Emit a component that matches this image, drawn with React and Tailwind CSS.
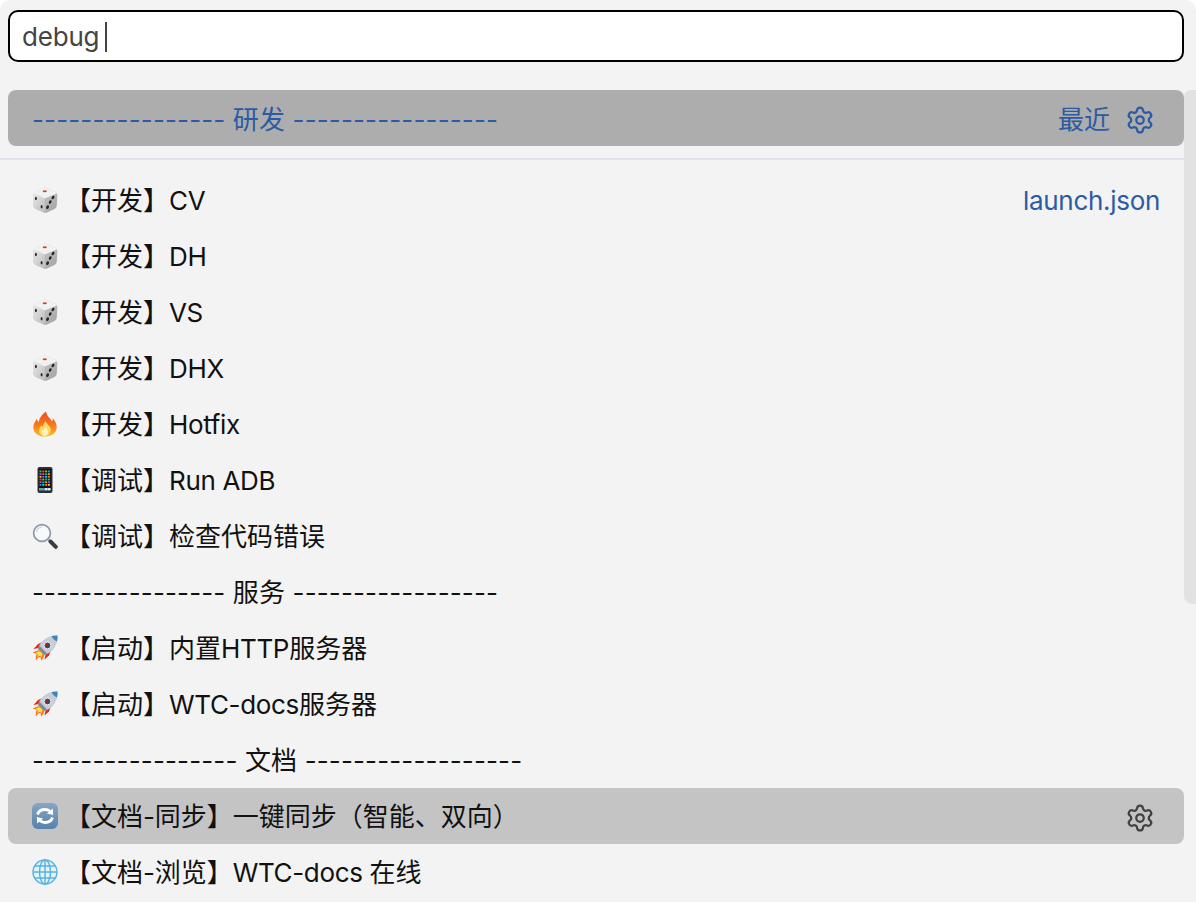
import React from 'react';
import { Settings } from 'lucide-react';

const Dice = () => (
  <svg width="26" height="26" viewBox="0 0 26 26">
    <defs>
      <linearGradient id="diceRight" x1="0" y1="0" x2="1" y2="1">
        <stop offset="0" stopColor="#d8d8d8" />
        <stop offset="1" stopColor="#a0a0a0" />
      </linearGradient>
      <linearGradient id="diceLeft" x1="0" y1="0" x2="1" y2="1">
        <stop offset="0" stopColor="#e8e8e8" />
        <stop offset="1" stopColor="#bcbcbc" />
      </linearGradient>
    </defs>
    <path d="M1 9C1 7 2.500 5.800 4 5L11 1.200C12.500.4 14 .4 15.500 1.200L22.500 4.500C24.200 5.300 25.400 6.500 25.300 8.500L24.800 18C24.700 20 23.800 21.200 22 22.200L15.500 25.300C14 26 12.800 26 11.300 25.300L4 22C2.200 21.200 1.400 20 1.300 18Z" fill="url(#diceRight)" />
    <path d="M1 9c0-1 .4-1.800 1-2.500L12.500 11.500 13.200 25.800c-.7 0-1.300-.1-1.900-.5L4 22C2.200 21.200 1.400 20 1.300 18Z" fill="url(#diceLeft)" />
    <path d="M2 6.500C2.500 5.900 3.200 5.400 4 5L11 1.200C12.500.4 14 .4 15.500 1.200L22.500 4.500C23.500 5 24.300 5.600 24.800 6.400L12.500 11.500Z" fill="#f1f1f1" />
    <ellipse cx="12.800" cy="4.300" rx="2.100" ry="1" fill="#dc3a30" />
    <ellipse cx="3.900" cy="11.500" rx="1" ry="1.700" fill="#2a2a2a" />
    <ellipse cx="9.600" cy="19.800" rx="1" ry="1.700" fill="#2a2a2a" />
    <ellipse cx="21" cy="10.500" rx="1.300" ry="1.900" fill="#242424" transform="rotate(28 21 10.500)" />
    <ellipse cx="18.200" cy="15" rx="1.300" ry="1.900" fill="#242424" transform="rotate(28 18.200 15)" />
    <ellipse cx="15.600" cy="20.200" rx="1.300" ry="1.900" fill="#242424" transform="rotate(28 15.600 20.200)" />
  </svg>
);

const Fire = () => (
  <svg width="26" height="26" viewBox="0 0 26 26">
    <defs>
      <linearGradient id="fireBody" x1="0" y1="0" x2="0" y2="1">
        <stop offset="0" stopColor="#f0481f" />
        <stop offset="0.55" stopColor="#f97a1e" />
        <stop offset="1" stopColor="#fbbf24" />
      </linearGradient>
    </defs>
    <path d="M14 .5C14.500 5 18.500 7 20 10.500c.6-1 .9-2 .8-3.200 2.700 3 3.900 6 3.900 9 0 5.500-5 9.200-11.700 9.200S1.300 22 1.300 16.200c0-3.500 2-6 3.500-8.500.3 1.500.8 2.500 1.700 3.200C7.500 6.500 10.500 3 14 .5Z" fill="url(#fireBody)" />
    <path d="M13.500 10c.5 2.500 4 4.500 5 7.500.8 3.800-2 7.500-5.500 7.500s-6.500-3-5.700-6.800c.3-1.700 1.300-2.700 2.200-4 .3.800.6 1.300 1.200 1.700.5-2.200 1.500-4 2.800-5.900Z" fill="#fdd96a" />
    <path d="M13.300 16c.4 1.400 2.400 2.800 2.700 4.500.2 2.300-1.400 4.500-3 4.500s-3.400-1.700-3.200-3.700c.2-1.200.8-1.900 1.300-2.800.3.400.5.600.9.800.2-1 .6-1.900 1.300-2.800Z" fill="#fff3c4" />
  </svg>
);

const Phone = () => {
  const colors = ['#34c759', '#3b82f6', '#f59e0b', '#ef4444', '#22d3ee', '#a855f7', '#84cc16', '#f97316', '#ec4899', '#0ea5e9', '#facc15', '#10b981'];
  const cells = [];
  for (let r = 0; r < 6; r++) {
    for (let c = 0; c < 4; c++) {
      cells.push(<rect key={r + '-' + c} x={7.500 + c * 2.800} y={3.500 + r * 2.700} width="2" height="1.800" fill={colors[(r * 5 + c * 3) % 12]} />);
    }
  }
  return (
    <svg width="26" height="26" viewBox="0 0 26 26">
      <rect x="5.500" y="0" width="15" height="26" rx="2" fill="#2f3033" />
      <rect x="6.800" y="2" width="12.400" height="22" fill="#131316" />
      {cells}
      <rect x="7" y="21" width="12" height="2.500" fill="#8fa3b5" />
      <rect x="7.500" y="21.300" width="2" height="1.900" fill="#22c55e" />
      <rect x="10.300" y="21.300" width="2" height="1.900" fill="#3b82f6" />
      <rect x="13.100" y="21.300" width="2" height="1.900" fill="#f8fafc" />
      <rect x="15.900" y="21.300" width="2" height="1.900" fill="#f8fafc" />
    </svg>
  );
};

const Magnifier = () => (
  <svg width="26" height="26" viewBox="0 0 26 26">
    <circle cx="10" cy="10" r="8.400" fill="#f7f9fb" stroke="#8d99a6" strokeWidth="1.700" />
    <path d="M4.500 9c.5-2.800 2.700-4.700 5.500-5" fill="none" stroke="#c7d0d9" strokeWidth="1.200" />
    <path d="m16.500 16.500 1.500 1.500" stroke="#a3acb5" strokeWidth="2.400" />
    <path d="m18.500 18.500 5.300 5.300" stroke="#3a3d44" strokeWidth="4" strokeLinecap="round" />
  </svg>
);

const Rocket = () => (
  <svg width="26" height="26" viewBox="0 0 26 26">
    <path d="M7 15 .5 17.500c2 .300 3.500 1 4.300 2-.8.800-1.300 3-1 6 1.500-2.500 3-3.500 4.700-3.500 0 1 .5 2.500 1 3.500 1.500-2 2.800-4 2.800-6Z" fill="#f97316" />
    <path d="M7 16 3.500 18c1 .300 2 .800 2.500 1.800-.4.800-.6 1.700-.6 2.700 1-1.300 2-2 3-2 .2.800.4 1.300.8 2 .8-1.300 1.300-2.600 1.300-4Z" fill="#fde047" />
    <path d="M12 6.500 6 9 1.500 14l5.500-1Z" fill="#d92d20" />
    <path d="m19.500 14-2.500 6.500-4.500 4 1-5.500Z" fill="#d92d20" />
    <path d="M25.500.5c-6-.5-11.500 1.500-15.500 6-2 2.500-3.500 5-4 7.500l6 6c2.500-.5 5-2 7.500-4 4.500-4 6.500-9.500 6-15.500Z" fill="#c6cfd8" />
    <path d="M25.500.5c-2-.200-4 0-6 .500 1 2.500 3 4.500 5.500 5.500.5-2 .700-4 .500-6Z" fill="#4384bb" />
    <path d="M6 14c.3-1 .8-2 1.500-3.200L15 18.500c-1 .700-2 1.200-3 1.500Z" fill="#7d8a98" />
    <circle cx="15.500" cy="10.500" r="3.400" fill="#3f4a57" stroke="#eef1f4" strokeWidth="1" />
    <circle cx="15" cy="10" r="1.300" fill="#b91c1c" />
  </svg>
);

const Sync = () => (
  <svg width="26" height="26" viewBox="0 0 26 26">
    <defs>
      <linearGradient id="syncBg" x1="0" y1="0" x2="0" y2="1">
        <stop offset="0" stopColor="#86a6c4" />
        <stop offset="1" stopColor="#5682ad" />
      </linearGradient>
    </defs>
    <rect x="0" y="0" width="26" height="26" rx="6" fill="url(#syncBg)" />
    <path d="M5.500 11.500C6.500 8.500 9.500 6.500 13 6.500c2 0 3.700.700 5 1.800" fill="none" stroke="#fff" strokeWidth="2.800" />
    <path d="m20.800 5.500.4 6.500-6.300-1.500Z" fill="#fff" />
    <path d="M20.500 14.500C19.500 17.500 16.500 19.500 13 19.500c-2 0-3.700-.7-5-1.800" fill="none" stroke="#fff" strokeWidth="2.800" />
    <path d="m5.200 20.500-.4-6.500 6.300 1.500Z" fill="#fff" />
  </svg>
);

const Globe = () => (
  <svg width="26" height="26" viewBox="0 0 26 26">
    <circle cx="13" cy="13" r="12.500" fill="#e4f2f9" />
    <g fill="none" stroke="#58b2de" strokeWidth="1.400">
      <circle cx="13" cy="13" r="12" />
      <ellipse cx="13" cy="13" rx="5.500" ry="12" />
      <path d="M13 1v24M1 13h24M3 7h20M3 19h20" />
    </g>
  </svg>
);

// latin runs sit a bit tighter than Inter's defaults
const Label = ({ text }) =>
  text.split(/([\x20-\x7e]+)/).map((part, i) =>
    i % 2 ? (
      <span key={i} className="tracking-[-0.35px]">{part}</span>
    ) : (
      part
    )
  );

const Separator = ({ text }) => <span className="whitespace-pre tracking-[0.13px]">{text}</span>;

const rows = [
  { icon: <Dice />, label: '【开发】CV', hint: 'launch.json' },
  { icon: <Dice />, label: '【开发】DH' },
  { icon: <Dice />, label: '【开发】VS' },
  { icon: <Dice />, label: '【开发】DHX' },
  { icon: <Fire />, label: '【开发】Hotfix' },
  { icon: <Phone />, label: '【调试】Run ADB' },
  { icon: <Magnifier />, label: '【调试】检查代码错误' },
  { separator: '---------------- 服务 -----------------' },
  { icon: <Rocket />, label: '【启动】内置HTTP服务器' },
  { icon: <Rocket />, label: '【启动】WTC-docs服务器' },
  { separator: '----------------- 文档 ------------------' },
  { icon: <Sync />, label: '【文档-同步】一键同步（智能、双向）', selected: true },
  { icon: <Globe />, label: '【文档-浏览】WTC-docs 在线' },
];

const Row = ({ row }) => {
  if (row.separator) {
    return (
      <div className="h-14 flex items-center px-6 rounded-lg">
        <span className="pt-[2px]"><Separator text={row.separator} /></span>
      </div>
    );
  }
  return (
    <div className={`h-14 flex items-center px-6 rounded-lg ${row.selected ? 'bg-[#c4c4c4]' : ''}`}>
      <span className="w-[26px] h-[26px] shrink-0 mr-[7px] flex">{row.icon}</span>
      <span className="flex-1 whitespace-pre pt-[2px]"><Label text={row.label} /></span>
      {row.hint && <span className="text-[#2c5ba3] pt-[2px] tracking-[-0.3px]">{row.hint}</span>}
      {row.selected && <Settings size={30} strokeWidth={1.8} className="text-[#424242] mr-[5px] mt-[3px]" />}
    </div>
  );
};

export default function App() {
  return (
    <div className="relative h-[902px] overflow-hidden bg-[#f3f3f3] rounded-t-[10px] text-[26px] leading-[32px] text-[#111] font-['Inter','Noto_Sans_CJK_SC',sans-serif]">
      <div className="pl-2 pr-3 pt-[10px]">
        <div className="h-[52px] bg-white border-2 border-black rounded-[10px] flex items-center pl-3 pt-[2px] text-[#444]">
          <span className="tracking-[-0.2px]">debug</span>
          <span className="w-[2px] h-[30px] bg-[#444] ml-[6px]" />
        </div>
      </div>

      <div className="pl-2 pr-3 pt-7">
        <div className="h-14 bg-[#adadad] rounded-lg flex items-center px-6 text-[#2c5ba3]">
          <span className="flex-1 pt-[3px]"><Separator text="---------------- 研发 -----------------" /></span>
          <span className="pt-[3px]">最近</span>
          <Settings size={30} strokeWidth={1.8} className="ml-[15px] mr-[5px] mt-[3px]" />
        </div>
      </div>

      <div className="h-[2px] bg-[#dfe1ee] mt-3" />

      <div className="pl-2 pr-3 pt-3">
        {rows.map((row, i) => (
          <Row key={i} row={row} />
        ))}
      </div>

      {/* overlay scrollbar */}
      <div className="absolute right-0 top-[90px] w-3 h-[514px] bg-[#e2e2e2] rounded-l-lg" />
    </div>
  );
}
